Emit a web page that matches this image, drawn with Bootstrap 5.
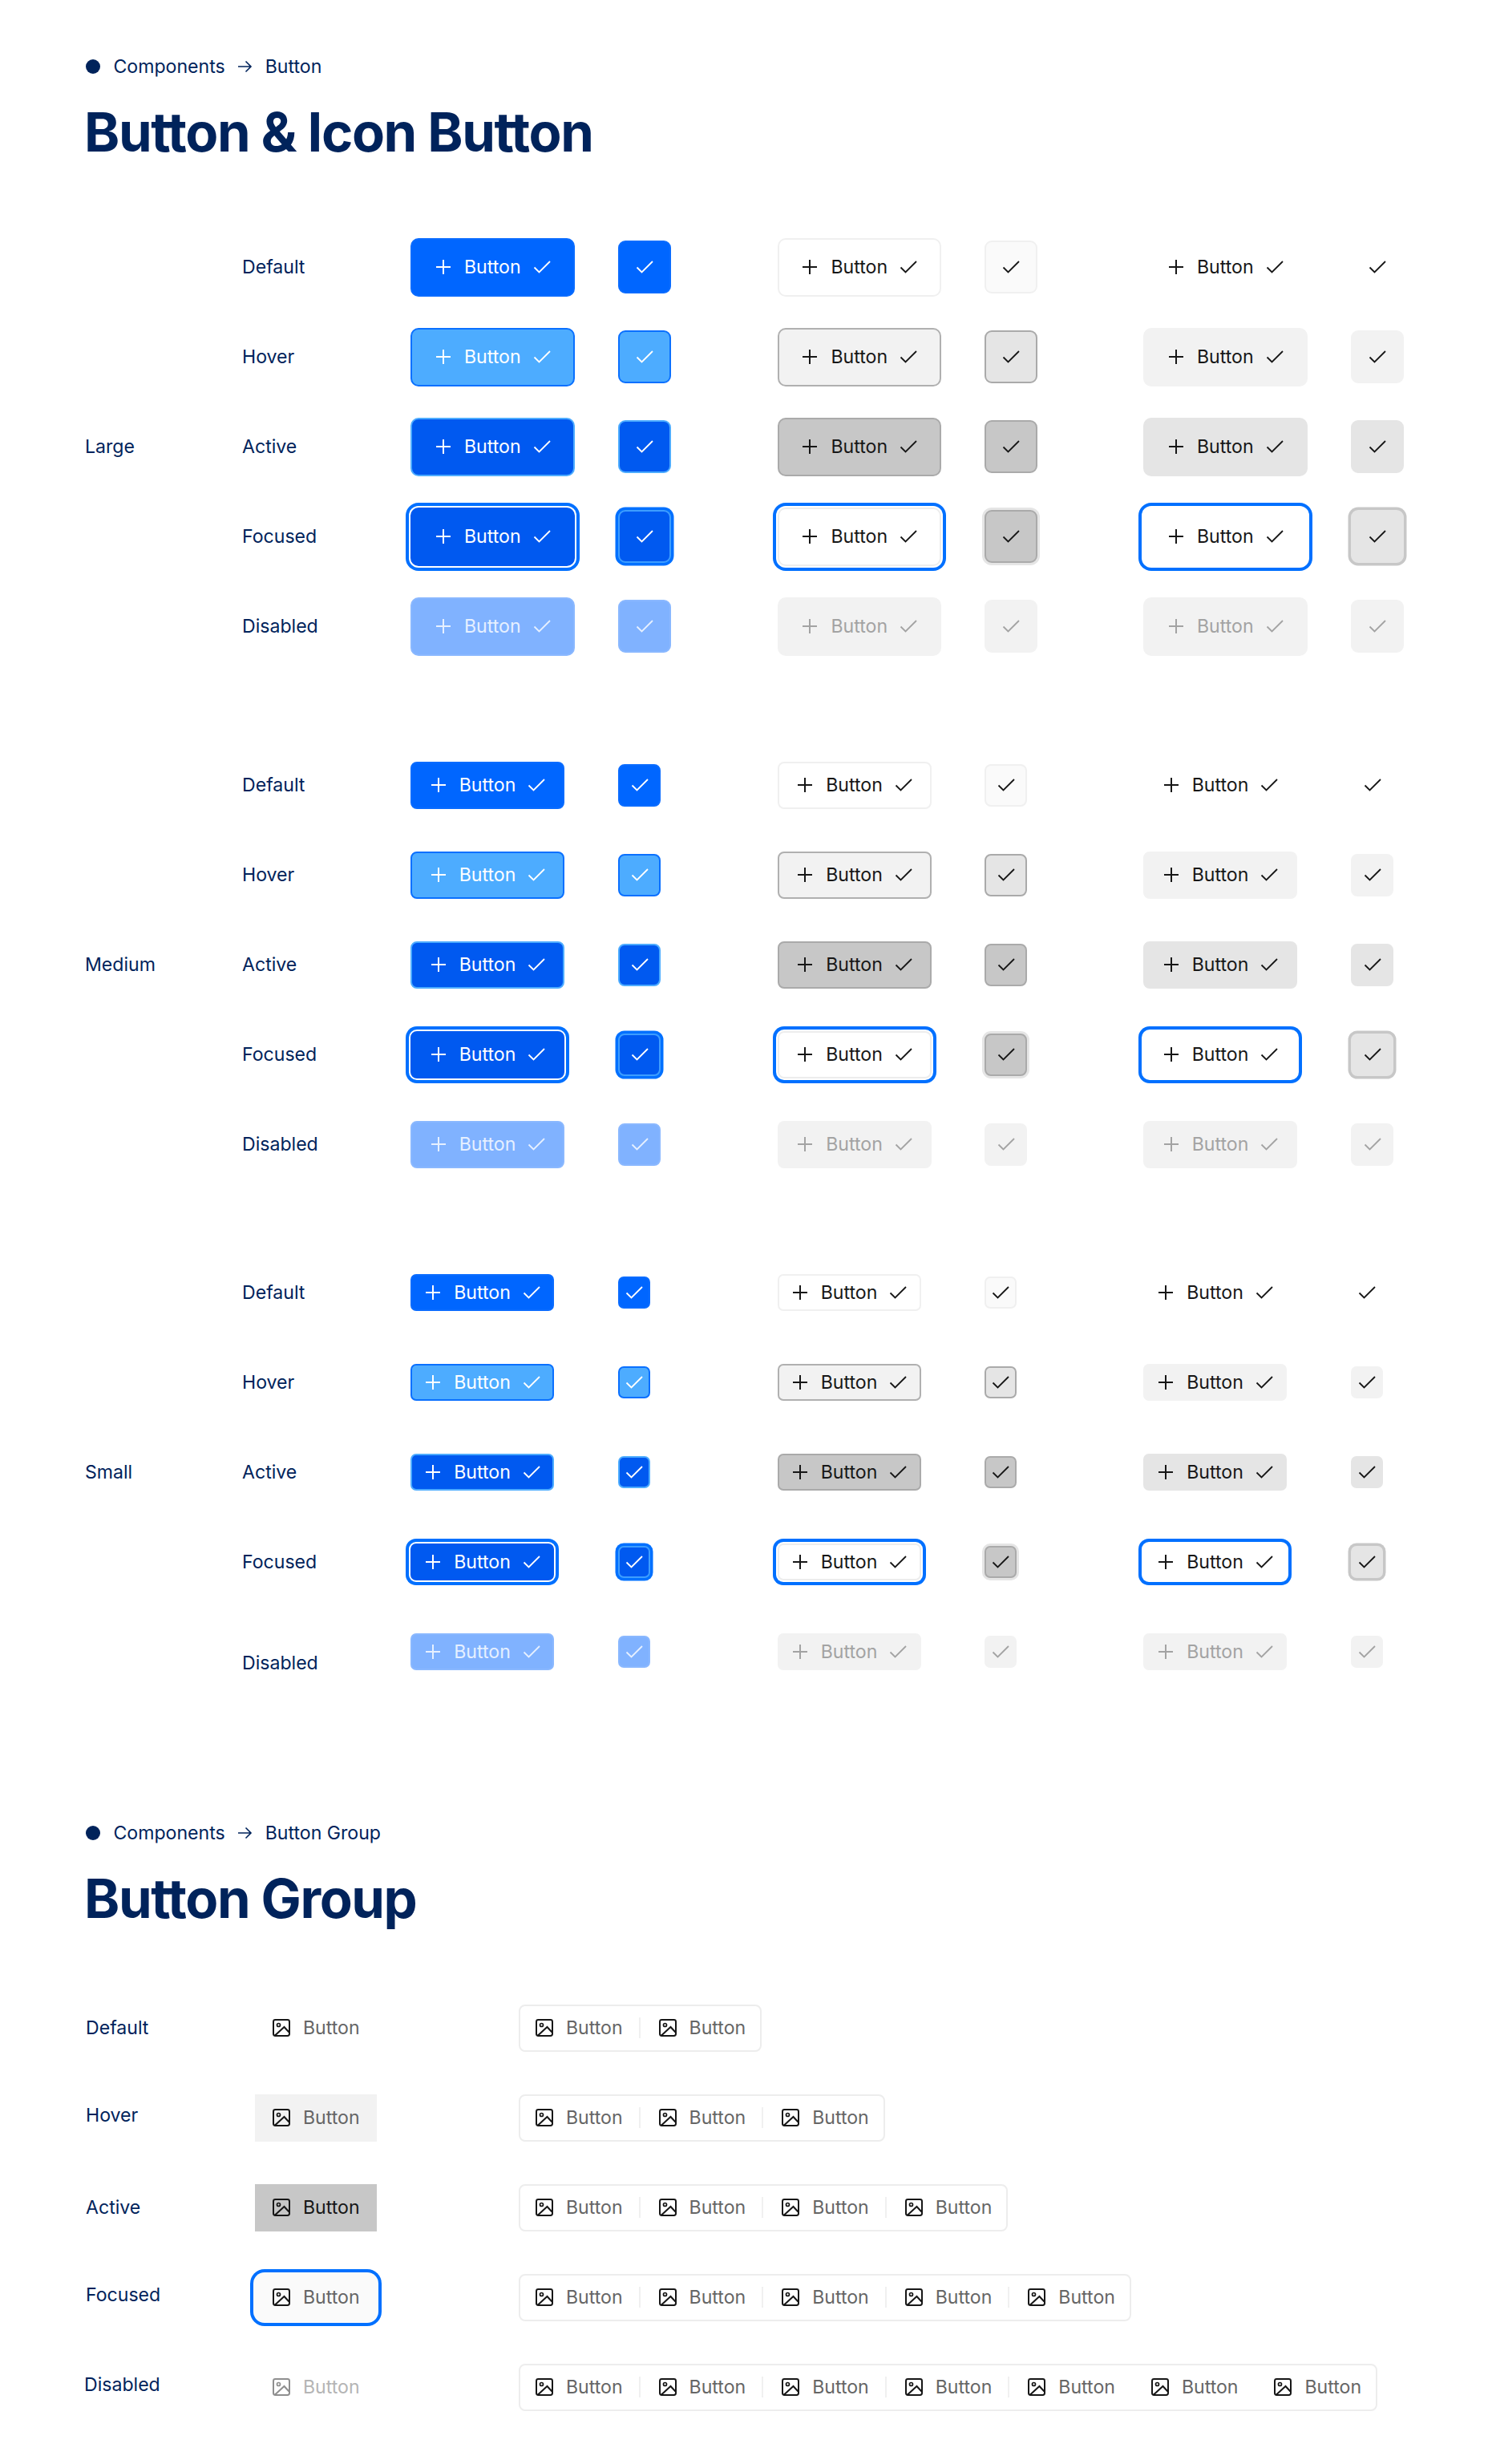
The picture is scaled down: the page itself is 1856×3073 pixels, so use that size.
<!doctype html>
<html lang="en"><head><meta charset="utf-8"><title>Button &amp; Icon Button</title>
<link href="https://cdn.jsdelivr.net/npm/bootstrap@5.3.0/dist/css/bootstrap.min.css" rel="stylesheet">
<style>
body{font-family:Inter,"Liberation Sans",sans-serif;color:#00235b;background:#fff;font-size:23.1px}
.pg{padding:65px 0 40px 105px;width:1856px}
.crumb{height:36px;font-size:23.1px;line-height:36px;gap:0}
.sec2{margin-top:152px}
.dotm{width:18px;height:18px;border-radius:50%;background:#00235b;margin:0 16.500px 0 2px}
.arw{width:20px;height:20px;margin:0 15.500px 0 14.500px}
.ttl{font-size:67px;line-height:78px;font-weight:700;letter-spacing:-1.45px;margin:25px 0 0;color:#00235b}
.blk{margin-top:73px}.blk2{margin-top:86px}.blk3{margin-top:73px}
.szl{width:196px;padding-left:1px}
.sr{display:grid;grid-template-columns:211px 259px 198.500px 258.500px 198px 259px 72px;height:112px;align-items:center}
.sr>div:first-child{padding-left:1px}
.lowl{padding-top:28px}
.kb{--g:#171717;display:inline-flex;align-items:center;justify-content:center;gap:14px;border:2px solid transparent;font-size:23.1px;font-weight:400;color:var(--g);padding:0;line-height:26px;justify-self:start;background:transparent}
.kb svg,.gb svg{width:24px;height:24px;flex:none;fill:none;stroke:currentColor;stroke-width:2}
.kc{stroke-width:1.8!important}
.z-l .kb{width:204.500px;height:73px;border-radius:10px}
.z-l .ki{width:66px;height:66px;border-radius:9px}
.z-m .kb{width:192px;height:59px;border-radius:8px}
.z-m .ki{width:53px;height:53px;border-radius:8px}
.z-s .kb{width:179px;height:46px;border-radius:7px}
.z-s .ki{width:40px;height:40px;border-radius:7px}
.kp{background:#0066ff;border-color:#0a6cff;color:#fff}
.st-h .kp{background:#4dacff;border-color:#0a70ff}
.st-a .kp{background:#0059f0;border-color:#4dacff}
.st-f .kp{background:#0059f0;border-color:#0059f0;box-shadow:0 0 0 2px #fff,0 0 0 6px #0070ff}
.st-f .kp.ki{border-color:#3d9dff;box-shadow:0 0 0 3.5px #0070ff}
.st-d .kp{background:#80b2ff;border-color:#8ab8ff;color:#e6f0ff}
.ks{background:#fff;border-color:#f0f0f0}
.ks.ki{background:#fafafa}
.st-h .ks{background:#f2f2f2;border-color:#b0b0b0}
.st-h .ks.ki{background:#e5e5e5;border-color:#aaa}
.st-a .ks,.st-a .ks.ki{background:#c7c7c7;border-color:#aaa}
.st-f .ks{background:#fff;border-color:#ededed;box-shadow:0 0 0 2px #fff,0 0 0 6px #0070ff}
.st-f .ks.ki{background:#c7c7c7;border-color:#aaa;box-shadow:0 0 0 3px #e5e5e5}
.st-d .ks,.st-d .ks.ki,.st-d .kt{background:#f2f2f2;border-color:#f2f2f2;color:#a3a3a3}
.st-h .kt{background:#f2f2f2;border-color:#f2f2f2}
.st-a .kt{background:#e5e5e5;border-color:#e5e5e5}
.st-f .kt{background:#fff;box-shadow:0 0 0 2px #fff,0 0 0 6px #0070ff}
.st-f .kt.ki{background:#e5e5e5;border-color:#e5e5e5;box-shadow:0 0 0 3.5px #c7c7c7}
.blkg{margin-top:66px}
.gr{display:grid;grid-template-columns:213px 329px 1fr;height:112px;align-items:center}
.gl{padding-left:2px}.up4{padding-bottom:5px}.up6{padding-bottom:6px}
.gb{display:inline-flex;align-items:center;gap:15px;color:#666;height:59px}
.gb svg{color:#171717}
.gs{width:152px;padding-left:21px;justify-self:start}
.g-h{background:#f2f2f2}
.g-a{background:#c7c7c7;color:#171717}
.g-f{background:#fafafa;border-radius:12px;box-shadow:0 0 0 2px #fafafa,0 0 0 6px #0070ff}
.g-d{color:#b5b5b5}.g-d svg{color:#8f8f8f}
.gg{border:2px solid #ededed;border-radius:8px;height:59px;justify-self:start}
.gg .gb{height:55px;padding:0 20px 0 18px}
.gg .gb:last-child{padding-right:18px}
.gd{width:2px;height:26px;background:#f0f0f0;margin-right:4px}
.gn{width:6px}
</style></head><body>
<svg class="d-none" aria-hidden="true"><defs>
<symbol id="ip" viewBox="0 0 24 24"><path d="M12 3v18M3 12h18"/></symbol>
<symbol id="ic" viewBox="0 0 24 24"><path d="M2.500 12.500l6 6L22 5"/></symbol>
<symbol id="im" viewBox="0 0 24 24"><rect x="2" y="2" width="20" height="20" rx="2.400"/><circle cx="8.500" cy="8.500" r="2" stroke-width="1.700"/><path d="M4 21.500L15.500 11l6 6.500"/></symbol>
</defs></svg>
<div class="pg">
<div class="crumb d-flex align-items-center"><span class="dotm"></span><span>Components</span><svg class="arw" viewBox="0 0 20 20" fill="none" stroke="currentColor" stroke-width="1.6"><path d="M2 10h16M11.500 3.500L18 10l-6.500 6.500"/></svg><span>Button</span></div>
<h1 class="ttl">Button &amp; Icon Button</h1>

<div class="d-flex align-items-center blk z-l"><div class="szl">Large</div><div>
<div class="sr"><div>Default</div><button class="btn kb kp"><svg><use href="#ip"/></svg>Button<svg class="kc"><use href="#ic"/></svg></button><button class="btn kb ki kp"><svg class="kc"><use href="#ic"/></svg></button><button class="btn kb ks"><svg><use href="#ip"/></svg>Button<svg class="kc"><use href="#ic"/></svg></button><button class="btn kb ki ks"><svg class="kc"><use href="#ic"/></svg></button><button class="btn kb kt"><svg><use href="#ip"/></svg>Button<svg class="kc"><use href="#ic"/></svg></button><button class="btn kb ki kt"><svg class="kc"><use href="#ic"/></svg></button></div>
<div class="sr st-h"><div>Hover</div><button class="btn kb kp"><svg><use href="#ip"/></svg>Button<svg class="kc"><use href="#ic"/></svg></button><button class="btn kb ki kp"><svg class="kc"><use href="#ic"/></svg></button><button class="btn kb ks"><svg><use href="#ip"/></svg>Button<svg class="kc"><use href="#ic"/></svg></button><button class="btn kb ki ks"><svg class="kc"><use href="#ic"/></svg></button><button class="btn kb kt"><svg><use href="#ip"/></svg>Button<svg class="kc"><use href="#ic"/></svg></button><button class="btn kb ki kt"><svg class="kc"><use href="#ic"/></svg></button></div>
<div class="sr st-a"><div>Active</div><button class="btn kb kp"><svg><use href="#ip"/></svg>Button<svg class="kc"><use href="#ic"/></svg></button><button class="btn kb ki kp"><svg class="kc"><use href="#ic"/></svg></button><button class="btn kb ks"><svg><use href="#ip"/></svg>Button<svg class="kc"><use href="#ic"/></svg></button><button class="btn kb ki ks"><svg class="kc"><use href="#ic"/></svg></button><button class="btn kb kt"><svg><use href="#ip"/></svg>Button<svg class="kc"><use href="#ic"/></svg></button><button class="btn kb ki kt"><svg class="kc"><use href="#ic"/></svg></button></div>
<div class="sr st-f"><div>Focused</div><button class="btn kb kp"><svg><use href="#ip"/></svg>Button<svg class="kc"><use href="#ic"/></svg></button><button class="btn kb ki kp"><svg class="kc"><use href="#ic"/></svg></button><button class="btn kb ks"><svg><use href="#ip"/></svg>Button<svg class="kc"><use href="#ic"/></svg></button><button class="btn kb ki ks"><svg class="kc"><use href="#ic"/></svg></button><button class="btn kb kt"><svg><use href="#ip"/></svg>Button<svg class="kc"><use href="#ic"/></svg></button><button class="btn kb ki kt"><svg class="kc"><use href="#ic"/></svg></button></div>
<div class="sr st-d"><div>Disabled</div><button class="btn kb kp"><svg><use href="#ip"/></svg>Button<svg class="kc"><use href="#ic"/></svg></button><button class="btn kb ki kp"><svg class="kc"><use href="#ic"/></svg></button><button class="btn kb ks"><svg><use href="#ip"/></svg>Button<svg class="kc"><use href="#ic"/></svg></button><button class="btn kb ki ks"><svg class="kc"><use href="#ic"/></svg></button><button class="btn kb kt"><svg><use href="#ip"/></svg>Button<svg class="kc"><use href="#ic"/></svg></button><button class="btn kb ki kt"><svg class="kc"><use href="#ic"/></svg></button></div>
</div></div>

<div class="d-flex align-items-center blk2 z-m"><div class="szl">Medium</div><div>
<div class="sr"><div>Default</div><button class="btn kb kp"><svg><use href="#ip"/></svg>Button<svg class="kc"><use href="#ic"/></svg></button><button class="btn kb ki kp"><svg class="kc"><use href="#ic"/></svg></button><button class="btn kb ks"><svg><use href="#ip"/></svg>Button<svg class="kc"><use href="#ic"/></svg></button><button class="btn kb ki ks"><svg class="kc"><use href="#ic"/></svg></button><button class="btn kb kt"><svg><use href="#ip"/></svg>Button<svg class="kc"><use href="#ic"/></svg></button><button class="btn kb ki kt"><svg class="kc"><use href="#ic"/></svg></button></div>
<div class="sr st-h"><div>Hover</div><button class="btn kb kp"><svg><use href="#ip"/></svg>Button<svg class="kc"><use href="#ic"/></svg></button><button class="btn kb ki kp"><svg class="kc"><use href="#ic"/></svg></button><button class="btn kb ks"><svg><use href="#ip"/></svg>Button<svg class="kc"><use href="#ic"/></svg></button><button class="btn kb ki ks"><svg class="kc"><use href="#ic"/></svg></button><button class="btn kb kt"><svg><use href="#ip"/></svg>Button<svg class="kc"><use href="#ic"/></svg></button><button class="btn kb ki kt"><svg class="kc"><use href="#ic"/></svg></button></div>
<div class="sr st-a"><div>Active</div><button class="btn kb kp"><svg><use href="#ip"/></svg>Button<svg class="kc"><use href="#ic"/></svg></button><button class="btn kb ki kp"><svg class="kc"><use href="#ic"/></svg></button><button class="btn kb ks"><svg><use href="#ip"/></svg>Button<svg class="kc"><use href="#ic"/></svg></button><button class="btn kb ki ks"><svg class="kc"><use href="#ic"/></svg></button><button class="btn kb kt"><svg><use href="#ip"/></svg>Button<svg class="kc"><use href="#ic"/></svg></button><button class="btn kb ki kt"><svg class="kc"><use href="#ic"/></svg></button></div>
<div class="sr st-f"><div>Focused</div><button class="btn kb kp"><svg><use href="#ip"/></svg>Button<svg class="kc"><use href="#ic"/></svg></button><button class="btn kb ki kp"><svg class="kc"><use href="#ic"/></svg></button><button class="btn kb ks"><svg><use href="#ip"/></svg>Button<svg class="kc"><use href="#ic"/></svg></button><button class="btn kb ki ks"><svg class="kc"><use href="#ic"/></svg></button><button class="btn kb kt"><svg><use href="#ip"/></svg>Button<svg class="kc"><use href="#ic"/></svg></button><button class="btn kb ki kt"><svg class="kc"><use href="#ic"/></svg></button></div>
<div class="sr st-d"><div>Disabled</div><button class="btn kb kp"><svg><use href="#ip"/></svg>Button<svg class="kc"><use href="#ic"/></svg></button><button class="btn kb ki kp"><svg class="kc"><use href="#ic"/></svg></button><button class="btn kb ks"><svg><use href="#ip"/></svg>Button<svg class="kc"><use href="#ic"/></svg></button><button class="btn kb ki ks"><svg class="kc"><use href="#ic"/></svg></button><button class="btn kb kt"><svg><use href="#ip"/></svg>Button<svg class="kc"><use href="#ic"/></svg></button><button class="btn kb ki kt"><svg class="kc"><use href="#ic"/></svg></button></div>
</div></div>

<div class="d-flex align-items-center blk3 z-s"><div class="szl">Small</div><div>
<div class="sr"><div>Default</div><button class="btn kb kp"><svg><use href="#ip"/></svg>Button<svg class="kc"><use href="#ic"/></svg></button><button class="btn kb ki kp"><svg class="kc"><use href="#ic"/></svg></button><button class="btn kb ks"><svg><use href="#ip"/></svg>Button<svg class="kc"><use href="#ic"/></svg></button><button class="btn kb ki ks"><svg class="kc"><use href="#ic"/></svg></button><button class="btn kb kt"><svg><use href="#ip"/></svg>Button<svg class="kc"><use href="#ic"/></svg></button><button class="btn kb ki kt"><svg class="kc"><use href="#ic"/></svg></button></div>
<div class="sr st-h"><div>Hover</div><button class="btn kb kp"><svg><use href="#ip"/></svg>Button<svg class="kc"><use href="#ic"/></svg></button><button class="btn kb ki kp"><svg class="kc"><use href="#ic"/></svg></button><button class="btn kb ks"><svg><use href="#ip"/></svg>Button<svg class="kc"><use href="#ic"/></svg></button><button class="btn kb ki ks"><svg class="kc"><use href="#ic"/></svg></button><button class="btn kb kt"><svg><use href="#ip"/></svg>Button<svg class="kc"><use href="#ic"/></svg></button><button class="btn kb ki kt"><svg class="kc"><use href="#ic"/></svg></button></div>
<div class="sr st-a"><div>Active</div><button class="btn kb kp"><svg><use href="#ip"/></svg>Button<svg class="kc"><use href="#ic"/></svg></button><button class="btn kb ki kp"><svg class="kc"><use href="#ic"/></svg></button><button class="btn kb ks"><svg><use href="#ip"/></svg>Button<svg class="kc"><use href="#ic"/></svg></button><button class="btn kb ki ks"><svg class="kc"><use href="#ic"/></svg></button><button class="btn kb kt"><svg><use href="#ip"/></svg>Button<svg class="kc"><use href="#ic"/></svg></button><button class="btn kb ki kt"><svg class="kc"><use href="#ic"/></svg></button></div>
<div class="sr st-f"><div>Focused</div><button class="btn kb kp"><svg><use href="#ip"/></svg>Button<svg class="kc"><use href="#ic"/></svg></button><button class="btn kb ki kp"><svg class="kc"><use href="#ic"/></svg></button><button class="btn kb ks"><svg><use href="#ip"/></svg>Button<svg class="kc"><use href="#ic"/></svg></button><button class="btn kb ki ks"><svg class="kc"><use href="#ic"/></svg></button><button class="btn kb kt"><svg><use href="#ip"/></svg>Button<svg class="kc"><use href="#ic"/></svg></button><button class="btn kb ki kt"><svg class="kc"><use href="#ic"/></svg></button></div>
<div class="sr st-d"><div class="lowl">Disabled</div><button class="btn kb kp"><svg><use href="#ip"/></svg>Button<svg class="kc"><use href="#ic"/></svg></button><button class="btn kb ki kp"><svg class="kc"><use href="#ic"/></svg></button><button class="btn kb ks"><svg><use href="#ip"/></svg>Button<svg class="kc"><use href="#ic"/></svg></button><button class="btn kb ki ks"><svg class="kc"><use href="#ic"/></svg></button><button class="btn kb kt"><svg><use href="#ip"/></svg>Button<svg class="kc"><use href="#ic"/></svg></button><button class="btn kb ki kt"><svg class="kc"><use href="#ic"/></svg></button></div>
</div></div>

<div class="crumb d-flex align-items-center sec2"><span class="dotm"></span><span>Components</span><svg class="arw" viewBox="0 0 20 20" fill="none" stroke="currentColor" stroke-width="1.6"><path d="M2 10h16M11.500 3.500L18 10l-6.500 6.500"/></svg><span>Button Group</span></div>
<h1 class="ttl">Button Group</h1>

<div class="blkg">
<div class="gr"><div class="gl">Default</div><div class="gb gs"><svg><use href="#im"/></svg>Button</div><div class="gg d-inline-flex align-items-center"><div class="gb"><svg><use href="#im"/></svg>Button</div><i class="gd"></i><div class="gb"><svg><use href="#im"/></svg>Button</div></div></div>
<div class="gr"><div class="gl up4">Hover</div><div class="gb gs g-h"><svg><use href="#im"/></svg>Button</div><div class="gg d-inline-flex align-items-center"><div class="gb"><svg><use href="#im"/></svg>Button</div><i class="gd"></i><div class="gb"><svg><use href="#im"/></svg>Button</div><i class="gd"></i><div class="gb"><svg><use href="#im"/></svg>Button</div></div></div>
<div class="gr"><div class="gl">Active</div><div class="gb gs g-a"><svg><use href="#im"/></svg>Button</div><div class="gg d-inline-flex align-items-center"><div class="gb"><svg><use href="#im"/></svg>Button</div><i class="gd"></i><div class="gb"><svg><use href="#im"/></svg>Button</div><i class="gd"></i><div class="gb"><svg><use href="#im"/></svg>Button</div><i class="gd"></i><div class="gb"><svg><use href="#im"/></svg>Button</div></div></div>
<div class="gr"><div class="gl up6">Focused</div><div class="gb gs g-f"><svg><use href="#im"/></svg>Button</div><div class="gg d-inline-flex align-items-center"><div class="gb"><svg><use href="#im"/></svg>Button</div><i class="gd"></i><div class="gb"><svg><use href="#im"/></svg>Button</div><i class="gd"></i><div class="gb"><svg><use href="#im"/></svg>Button</div><i class="gd"></i><div class="gb"><svg><use href="#im"/></svg>Button</div><i class="gd"></i><div class="gb"><svg><use href="#im"/></svg>Button</div></div></div>
<div class="gr"><div class="up6">Disabled</div><div class="gb gs g-d"><svg><use href="#im"/></svg>Button</div><div class="gg d-inline-flex align-items-center"><div class="gb"><svg><use href="#im"/></svg>Button</div><i class="gd"></i><div class="gb"><svg><use href="#im"/></svg>Button</div><i class="gd"></i><div class="gb"><svg><use href="#im"/></svg>Button</div><i class="gd"></i><div class="gb"><svg><use href="#im"/></svg>Button</div><i class="gd"></i><div class="gb"><svg><use href="#im"/></svg>Button</div><i class="gn"></i><div class="gb"><svg><use href="#im"/></svg>Button</div><i class="gn"></i><div class="gb"><svg><use href="#im"/></svg>Button</div></div></div>
</div>
</div>
</body></html>
